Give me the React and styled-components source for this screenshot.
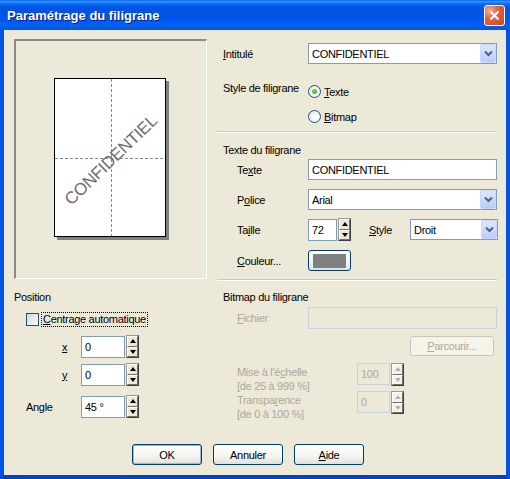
import React from 'react';
import styled, { createGlobalStyle } from 'styled-components';

const GlobalStyle = createGlobalStyle`
  html, body {
    margin: 0;
    padding: 0;
    background: #ECE9D8;
  }
  body {
    font-family: "Liberation Sans", Arial, sans-serif;
    font-size: 11px;
    letter-spacing: -0.3px;
    color: #000;
  }
`;

const Window = styled.div`
  width: 510px;
  height: 479px;
  display: flex;
  flex-direction: column;
  overflow: hidden;
`;

const TitleBar = styled.div`
  height: 30px;
  flex: none;
  display: flex;
  align-items: center;
  justify-content: space-between;
  padding: 0 5px 0 7px;
  box-sizing: border-box;
  background: linear-gradient(
    to bottom,
    #0058ee 0%,
    #3593ff 4%,
    #288eff 7%,
    #127dff 10%,
    #036ffc 13%,
    #0262ee 17%,
    #0057e5 22%,
    #0054e3 28%,
    #0055eb 60%,
    #005bf5 72%,
    #0262ee 84%,
    #0055e5 100%
  );
`;

const TitleText = styled.span`
  color: #fff;
  font-weight: bold;
  font-size: 13px;
  letter-spacing: 0;
  text-shadow: 1px 1px 0 #0a1883;
  padding-top: 1px;
`;

const CloseButton = styled.div`
  width: 21px;
  height: 21px;
  box-sizing: border-box;
  border: 1px solid #fff;
  border-radius: 3px;
  background: radial-gradient(circle at 25% 25%, #f4b19a 0%, #e2643f 40%, #cc4520 100%);
  display: flex;
  align-items: center;
  justify-content: center;
`;

const Frame = styled.div`
  flex: 1;
  display: flex;
  flex-direction: column;
  background: #ECE9D8;
  border-style: solid;
  border-color: #0054e3;
  border-width: 0 4px 4px 4px;
  border-bottom-color: #0044c0;
  padding: 9px 9px 0 10px;
`;

const Section = styled.div`
  display: flex;
  align-items: flex-start;
  gap: 10px;
`;

const Column = styled.div`
  width: ${p => p.$w}px;
  flex: none;
  display: flex;
  flex-direction: column;
`;

const Preview = styled.div`
  width: 193px;
  height: 240px;
  box-sizing: border-box;
  border-style: solid;
  border-width: 2px 1px 1px 2px;
  border-color: #8e8d85 #fff #fff #8e8d85;
  display: flex;
  align-items: center;
  justify-content: center;
  padding: 0 0 1px 2px;
`;

const Row = styled.div`
  display: flex;
  align-items: ${p => p.$align || 'center'};
  margin-top: ${p => p.$mt || 0}px;
  padding-left: ${p => p.$pl || 0}px;
  height: ${p => (p.$h ? `${p.$h}px` : 'auto')};
  flex: none;
`;

const Label = styled.div`
  width: ${p => p.$w}px;
  margin-left: ${p => p.$ml || 0}px;
  flex: none;
  line-height: ${p => p.$lh || 14}px;
  padding-top: ${p => p.$pt || 0}px;
  white-space: nowrap;
  color: ${p => (p.$disabled ? '#ACA899' : '#000')};
`;

const Key = styled.span`
  text-decoration: underline;
`;

const SectionTitle = styled.div`
  margin-top: ${p => p.$mt || 0}px;
  padding-left: ${p => p.$pl || 0}px;
  line-height: 14px;
`;

const Separator = styled.div`
  margin-top: ${p => p.$mt || 0}px;
  height: 0;
  border-top: 1px solid #cac7b7;
  border-bottom: 1px solid #fff;
`;

const Field = styled.div`
  width: ${p => p.$w}px;
  height: ${p => p.$h || 21}px;
  flex: none;
  box-sizing: border-box;
  border: 1px solid ${p => (p.$disabled ? '#c5d3e2' : '#7f9db9')};
  background: ${p => (p.$disabled ? '#ECE9D8' : '#fff')};
  color: ${p => (p.$disabled ? '#ACA899' : '#000')};
  padding-left: 3px;
  display: flex;
  align-items: center;
  justify-content: space-between;
  white-space: nowrap;
`;

const DropArrow = styled.span`
  width: 16px;
  height: 100%;
  box-sizing: border-box;
  border: 1px solid #c6d6fc;
  border-radius: 2px;
  background: linear-gradient(#dfe8fd, #b9cdf7);
  display: flex;
  align-items: center;
  justify-content: center;
`;

const SpinWrap = styled.div`
  width: 13px;
  height: 23px;
  margin-left: 1px;
  flex: none;
  display: flex;
  flex-direction: column;
  box-sizing: border-box;
  border: 1px solid #404040;
  border-top-color: #9c9a90;
  border-left-color: #9c9a90;
`;

const SpinButton = styled.div`
  flex: 1;
  box-sizing: border-box;
  background: ${p => (p.$disabled ? '#f4f3ee' : '#ECE9D8')};
  border-style: solid;
  border-width: 1px;
  border-color: #fff #6f6e68 #6f6e68 #fff;
  display: flex;
  align-items: center;
  justify-content: center;
`;

const Arrow = styled.span`
  width: 0;
  height: 0;
  border-left: 3.5px solid transparent;
  border-right: 3.5px solid transparent;
  ${p => (p.$down ? 'border-top' : 'border-bottom')}: 4px solid ${p => (p.$disabled ? '#b5b2a6' : '#000')};
`;

const RadioStack = styled.div`
  display: flex;
  flex-direction: column;
  gap: 8px;
`;

const Option = styled.div`
  display: flex;
  align-items: center;
  gap: 3px;
  height: 17px;
`;

const RadioCircle = styled.span`
  width: 13px;
  height: 13px;
  box-sizing: border-box;
  border-radius: 50%;
  border: 1px solid #1c5180;
  background: radial-gradient(circle at 60% 60%, #fff 20%, #e2e2dd 80%);
  display: flex;
  align-items: center;
  justify-content: center;
  &::after {
    content: '';
    display: ${p => (p.$checked ? 'block' : 'none')};
    width: 5px;
    height: 5px;
    border-radius: 50%;
    background: radial-gradient(circle at 35% 35%, #74d874, #21a121);
  }
`;

const CheckBox = styled.span`
  width: 13px;
  height: 13px;
  box-sizing: border-box;
  border: 1px solid #1c5180;
  background: linear-gradient(135deg, #d6d5ce, #fff);
  flex: none;
`;

const FocusLabel = styled.span`
  margin-left: 2px;
  padding: 0 1px;
  border: 1px dotted #000;
  line-height: 13px;
`;

const XPButton = styled.div`
  width: ${p => p.$w}px;
  height: ${p => p.$h || 21}px;
  box-sizing: border-box;
  flex: none;
  border: 1px solid ${p => (p.$disabled ? '#c9c7ba' : '#003c74')};
  border-radius: 3px;
  background: ${p => (p.$disabled ? '#f5f4ea' : 'linear-gradient(#ffffff 0%, #f4f4f0 60%, #e3e0d6 100%)')};
  color: ${p => (p.$disabled ? '#ACA899' : '#000')};
  box-shadow: ${p => (p.$default ? 'inset 0 0 0 1px #98b4e8' : 'none')};
  display: flex;
  align-items: center;
  justify-content: center;
`;

const Swatch = styled.span`
  width: 33px;
  height: 14px;
  background: #808080;
  border-left: 1px solid #f4f3ee;
  border-right: 1px solid #f4f3ee;
`;

const ButtonLine = styled.div`
  display: flex;
  justify-content: flex-end;
  margin-top: ${p => p.$mt || 0}px;
  padding-right: 3px;
`;

const Footer = styled.div`
  display: flex;
  gap: 11px;
  margin-top: 25px;
  padding-left: 118px;
`;

const Chevron = () => (
  <svg width="9" height="7" viewBox="0 0 9 7">
    <path d="M1 1.5 L4.5 5 L8 1.5" fill="none" stroke="#4d6185" strokeWidth="2" />
  </svg>
);

const Select = ({ w, children }) => (
  <Field $w={w}>
    {children}
    <DropArrow>
      <Chevron />
    </DropArrow>
  </Field>
);

const SpinField = ({ w, value, disabled }) => (
  <>
    <Field $w={w} $h={22} $disabled={disabled}>
      {value}
    </Field>
    <SpinWrap $disabled={disabled}>
      <SpinButton $disabled={disabled}>
        <Arrow $disabled={disabled} />
      </SpinButton>
      <SpinButton $disabled={disabled}>
        <Arrow $down $disabled={disabled} />
      </SpinButton>
    </SpinWrap>
  </>
);

const PagePreview = () => (
  <svg width="116" height="163" viewBox="0 0 116 163">
    <rect x="3" y="3" width="112" height="159" fill="#808080" />
    <rect x="0.5" y="0.5" width="111" height="158" fill="#fff" stroke="#000" />
    <line x1="57.5" y1="1" x2="57.5" y2="158" stroke="#7f8c99" strokeDasharray="3 2" />
    <line x1="1" y1="80.5" x2="111" y2="80.5" stroke="#7f8c99" strokeDasharray="3 2" />
    <text
      x="57"
      y="82"
      textAnchor="middle"
      dominantBaseline="central"
      transform="rotate(-44 57 82)"
      fontFamily="Liberation Sans, Arial, sans-serif"
      fontSize="17"
      fill="#6e6e6e"
    >
      CONFIDENTIEL
    </text>
  </svg>
);

const App = () => (
  <>
    <GlobalStyle />
    <Window>
      <TitleBar>
        <TitleText>Paramétrage du filigrane</TitleText>
        <CloseButton>
          <svg width="11" height="11" viewBox="0 0 11 11">
            <path d="M1.5 1.5 L9.5 9.5 M9.5 1.5 L1.5 9.5" stroke="#fff" strokeWidth="2" />
          </svg>
        </CloseButton>
      </TitleBar>

      <Frame>
        <Section>
          <Preview>
            <PagePreview />
          </Preview>

          <Column $w={280}>
            <Row $mt={4} $pl={6}>
              <Label $w={85}><Key>I</Key>ntitulé</Label>
              <Select w={189}>CONFIDENTIEL</Select>
            </Row>
            <Row $mt={19} $pl={6} $align="flex-start">
              <Label $w={85} $lh={11}>Style de filigrane</Label>
              <RadioStack>
                <Option>
                  <RadioCircle $checked />
                  <span><Key>T</Key>exte</span>
                </Option>
                <Option>
                  <RadioCircle />
                  <span><Key>B</Key>itmap</span>
                </Option>
              </RadioStack>
            </Row>
            <Separator $mt={6} />

            <SectionTitle $mt={10} $pl={6}>Texte du filigrane</SectionTitle>
            <Row $mt={2} $pl={20}>
              <Label $w={71}>Te<Key>x</Key>te</Label>
              <Field $w={189}>CONFIDENTIEL</Field>
            </Row>
            <Row $mt={9} $pl={20}>
              <Label $w={71}>P<Key>o</Key>lice</Label>
              <Select w={189}>Arial</Select>
            </Row>
            <Row $mt={8} $pl={20} $h={23}>
              <Label $w={71}>Ta<Key>i</Key>lle</Label>
              <SpinField w={29} value="72" />
              <Label $w={41} $ml={18}><Key>S</Key>tyle</Label>
              <Select w={88}>Droit</Select>
            </Row>
            <Row $mt={9} $pl={20}>
              <Label $w={71}><Key>C</Key>ouleur...</Label>
              <XPButton $w={43}>
                <Swatch />
              </XPButton>
            </Row>
            <Separator $mt={8} />
          </Column>
        </Section>

        <Section>
          <Column $w={193}>
            <SectionTitle $mt={9}>Position</SectionTitle>
            <Row $mt={8} $pl={12} $h={15}>
              <CheckBox />
              <FocusLabel><Key>C</Key>entrage automatique</FocusLabel>
            </Row>
            <Row $mt={8} $pl={48} $h={23}>
              <Label $w={19}><Key>x</Key></Label>
              <SpinField w={44} value="0" />
            </Row>
            <Row $mt={5} $pl={48} $h={23}>
              <Label $w={19}><Key>y</Key></Label>
              <SpinField w={44} value="0" />
            </Row>
            <Row $mt={9} $pl={12} $h={23}>
              <Label $w={55}>Angle</Label>
              <SpinField w={44} value="45 °" />
            </Row>
          </Column>

          <Column $w={280}>
            <SectionTitle $mt={9} $pl={6}>Bitmap du filigrane</SectionTitle>
            <Row $mt={3} $pl={20}>
              <Label $w={71} $disabled><Key>F</Key>ichier</Label>
              <Field $w={189} $h={22} $disabled />
            </Row>
            <ButtonLine $mt={7}>
              <XPButton $w={84} $h={20} $disabled>
                <span><Key>P</Key>arcourir...</span>
              </XPButton>
            </ButtonLine>
            <Row $mt={7} $pl={20} $h={28} $align="flex-start">
              <Label $w={120} $pt={2} $disabled>
                Mise à l'é<Key>c</Key>helle
                <br />
                [de 25 à 999 %]
              </Label>
              <SpinField w={33} value="100" disabled />
            </Row>
            <Row $pl={20} $h={28} $align="flex-start">
              <Label $w={120} $pt={2} $disabled>
                Transpa<Key>r</Key>ence
                <br />
                [de 0 à 100 %]
              </Label>
              <SpinField w={33} value="0" disabled />
            </Row>
          </Column>
        </Section>

        <Footer>
          <XPButton $w={70} $default>OK</XPButton>
          <XPButton $w={70}>Annuler</XPButton>
          <XPButton $w={70}><span><Key>A</Key>ide</span></XPButton>
        </Footer>
      </Frame>
    </Window>
  </>
);

export default App;
